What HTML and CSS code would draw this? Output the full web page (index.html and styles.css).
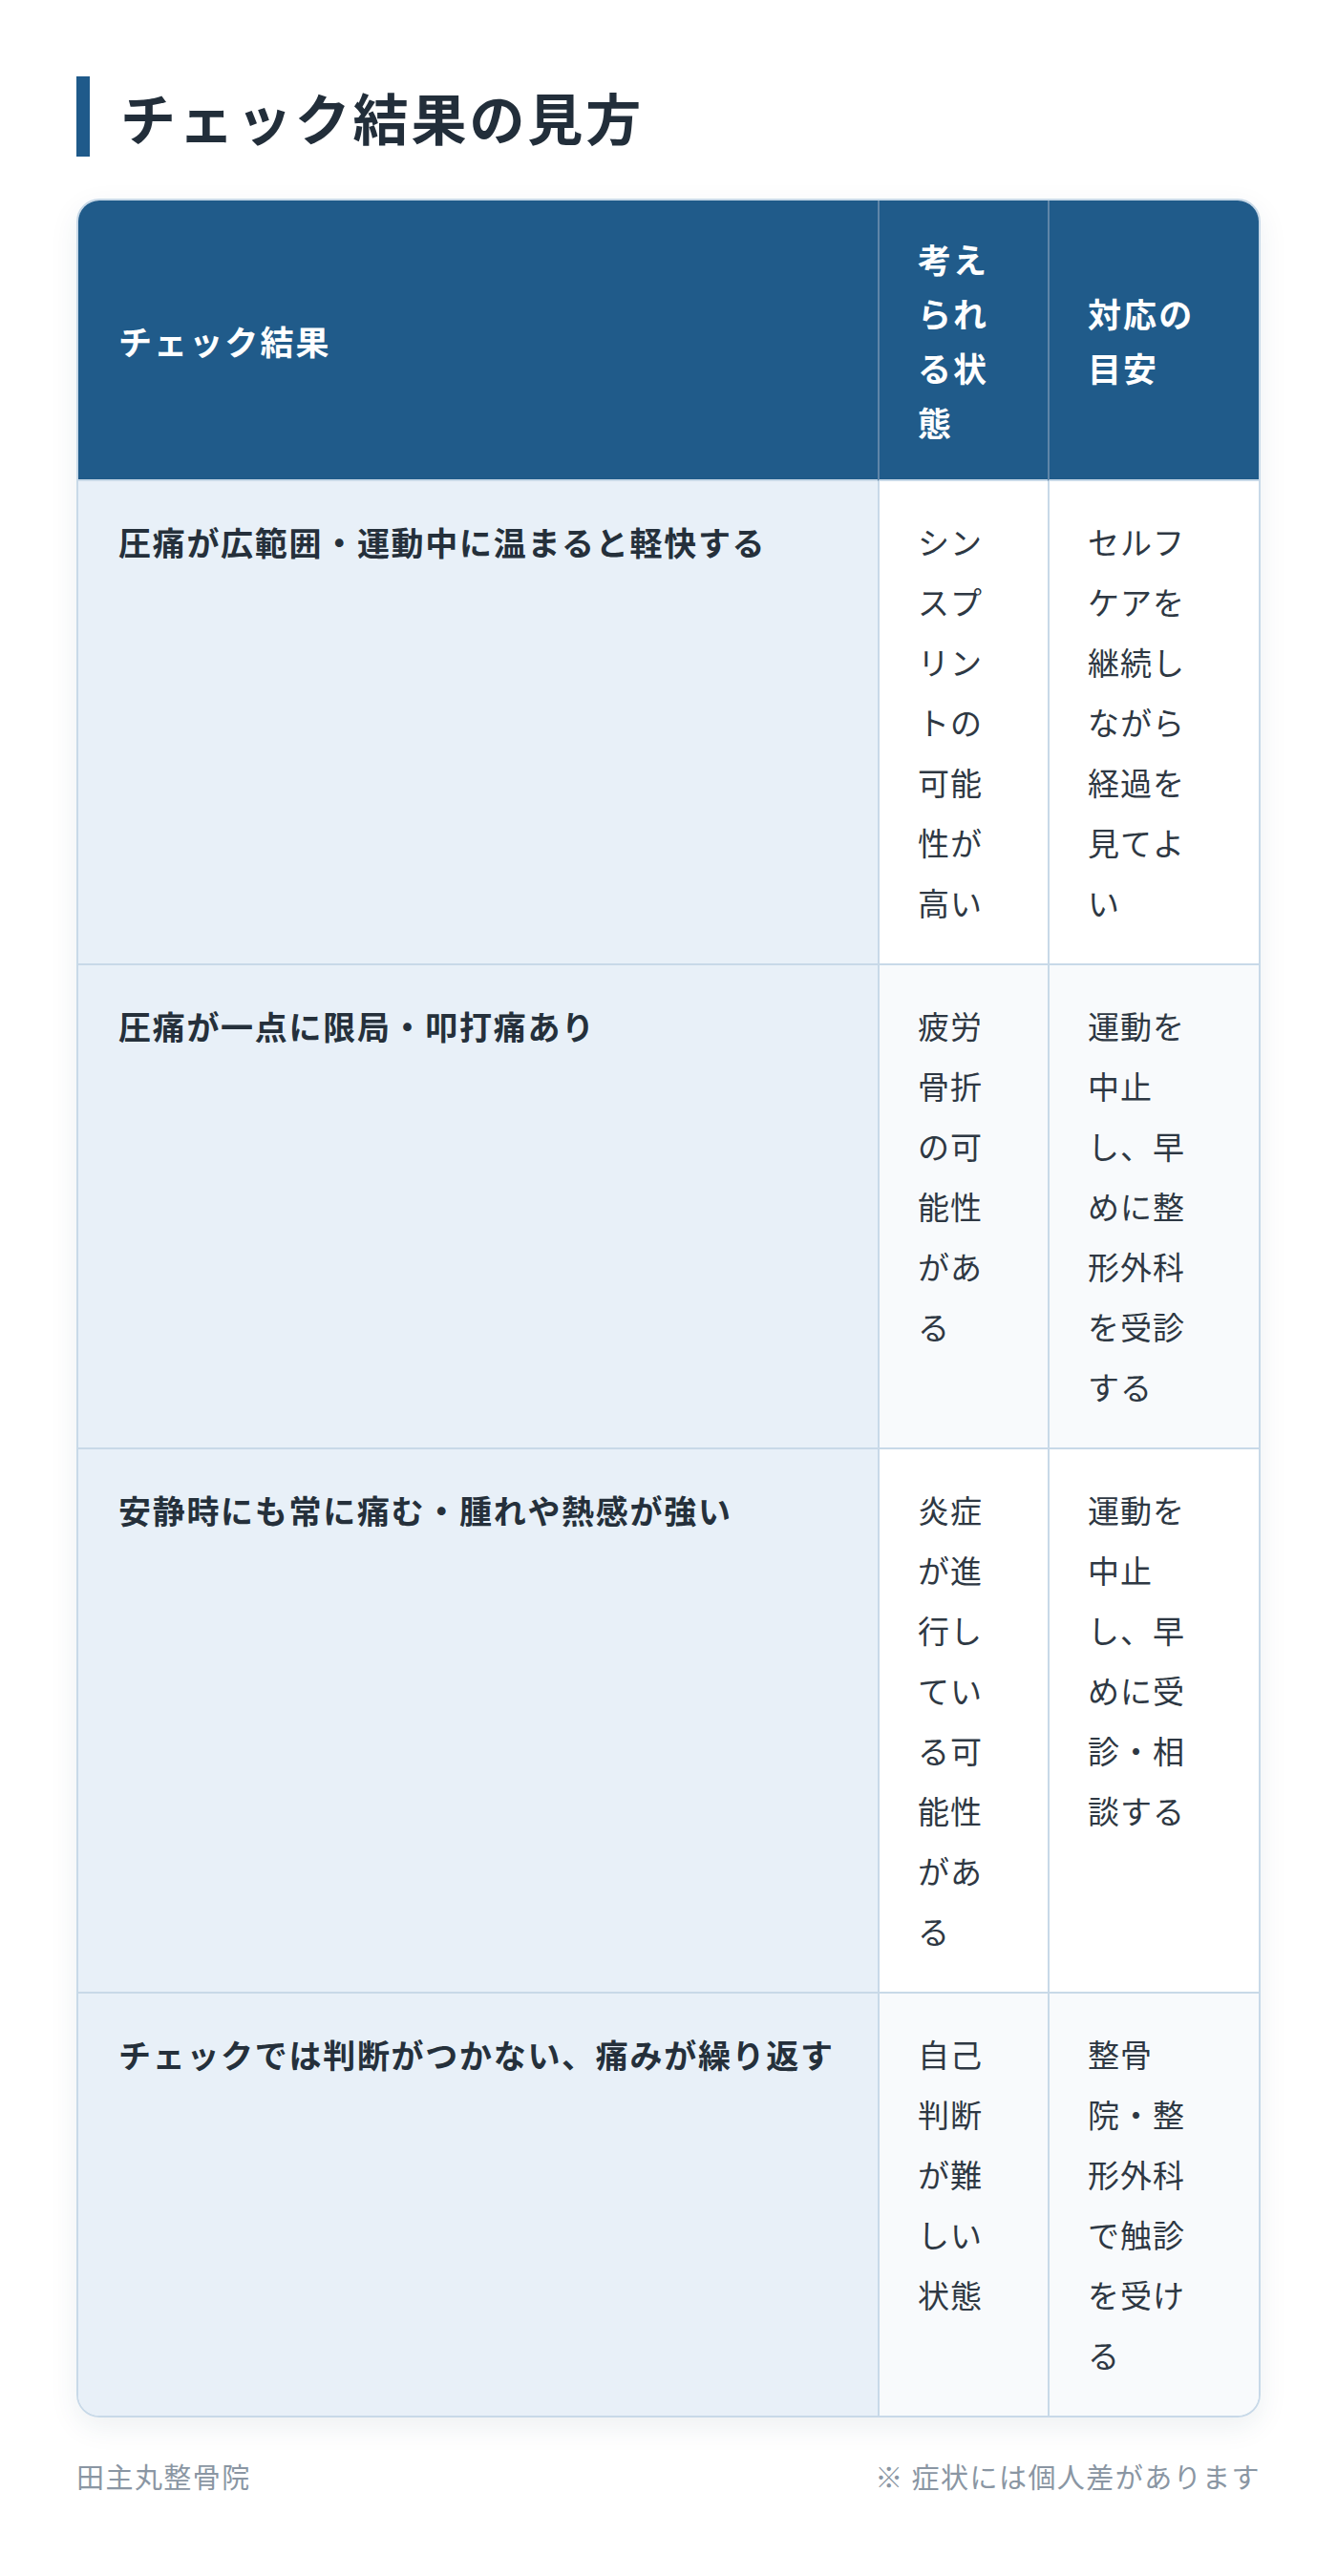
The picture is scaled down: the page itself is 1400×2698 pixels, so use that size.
FILE: index.html
```html
<!DOCTYPE html>
<html lang="ja">
<head>
<meta charset="utf-8">
<title>チェック結果の見方</title>
<link rel="stylesheet" href="styles.css">
</head>
<body>
<main class="page">
  <h1 class="title">チェック結果の見方</h1>
  <div class="table-wrap">
    <table class="result-table">
      <colgroup>
        <col class="col-check">
        <col class="col-state">
        <col class="col-action">
      </colgroup>
      <thead>
        <tr>
          <th>チェック結果</th>
          <th>考えられる状態</th>
          <th>対応の目安</th>
        </tr>
      </thead>
      <tbody>
        <tr>
          <td class="check">圧痛が広範囲・運動中に温まると軽快する</td>
          <td>シンスプリントの可能性が高い</td>
          <td>セルフケアを継続しながら経過を見てよい</td>
        </tr>
        <tr>
          <td class="check">圧痛が一点に限局・叩打痛あり</td>
          <td>疲労骨折の可能性がある</td>
          <td>運動を中止し、早めに整形外科を受診する</td>
        </tr>
        <tr>
          <td class="check">安静時にも常に痛む・腫れや熱感が強い</td>
          <td>炎症が進行している可能性がある</td>
          <td>運動を中止し、早めに受診・相談する</td>
        </tr>
        <tr>
          <td class="check">チェックでは判断がつかない、痛みが繰り返す</td>
          <td>自己判断が難しい状態</td>
          <td>整骨院・整形外科で触診を受ける</td>
        </tr>
      </tbody>
    </table>
  </div>
  <footer class="footer">
    <span>田主丸整骨院</span>
    <span>※ 症状には個人差があります</span>
  </footer>
</main>
</body>
</html>
```
FILE: styles.css
```css
* { box-sizing: border-box; }

body {
  margin: 0;
  background: #ffffff;
  font-family: "Noto Sans CJK JP", "Noto Sans", sans-serif;
  color: #2a3440;
}

.page {
  padding: 80px 80px 60px;
}

.title {
  margin: 0 0 44px;
  font-size: 58px;
  font-weight: 700;
  line-height: 84px;
  letter-spacing: 0.05em;
  color: #222e3a;
  border-left: 14px solid #1f5a8a;
  padding-left: 32px;
}

.table-wrap {
  border: 2px solid #c8d9e8;
  border-radius: 24px;
  overflow: hidden;
  box-shadow: 0 10px 30px rgba(30, 60, 90, 0.08);
}

.result-table {
  width: 100%;
  table-layout: fixed;
  border-collapse: separate;
  border-spacing: 0;
}

.col-state { width: 178px; }
.col-action { width: 221px; }

.result-table th {
  background: #205b8a;
  color: #ffffff;
  font-size: 35px;
  font-weight: 700;
  line-height: 57px;
  letter-spacing: 0.06em;
  text-align: left;
  vertical-align: middle;
  padding: 32px 44px 32px 40px;
  border-bottom: 2px solid #c8d9e8;
}

.result-table th:first-child {
  padding-left: 42px;
}

.result-table th + th {
  border-left: 2px solid #5f86a8;
}

.result-table td {
  vertical-align: top;
  padding: 32px 48px 32px 40px;
  font-size: 33px;
  font-weight: 400;
  line-height: 63px;
  letter-spacing: 0.03em;
  color: #2e3843;
  background: #ffffff;
}

.result-table td + td {
  border-left: 2px solid #c8d9e8;
}

.result-table tbody tr + tr td {
  border-top: 2px solid #c8d9e8;
}

.result-table tbody tr:nth-child(even) td {
  background: #f8fafc;
}

.result-table td.check,
.result-table tbody tr:nth-child(even) td.check {
  background: #e8f0f8;
  font-size: 34px;
  font-weight: 700;
  letter-spacing: 0.05em;
  color: #25303b;
  padding-left: 42px;
  padding-right: 24px;
}

.footer {
  display: flex;
  justify-content: space-between;
  margin-top: 40px;
  font-size: 29px;
  line-height: 42px;
  letter-spacing: 0.05em;
  color: #8a96a3;
}
```
